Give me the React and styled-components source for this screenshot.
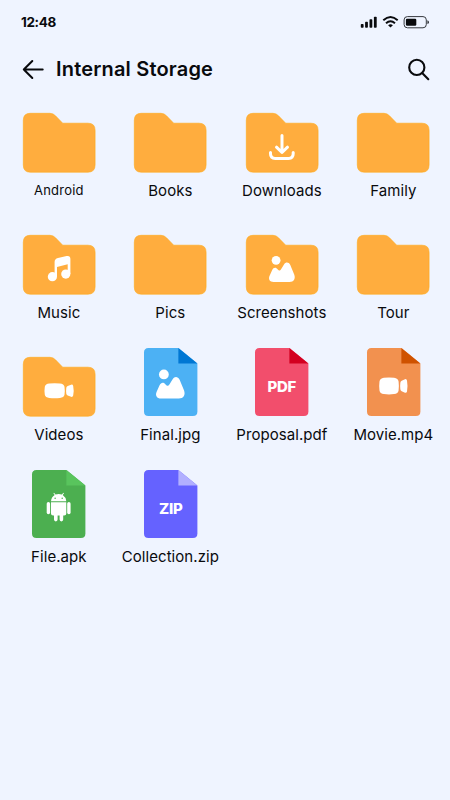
import React from 'react';
import styled, { createGlobalStyle } from 'styled-components';

const GlobalStyle = createGlobalStyle`
  * { box-sizing: border-box; }
  body { margin: 0; background: #eff4ff; }
`;

const Screen = styled.main`
  width: 450px;
  height: 800px;
  overflow: hidden;
  background: #eff4ff;
  color: #090a0d;
  font-family: Inter, 'Liberation Sans', sans-serif;
`;

const StatusBar = styled.div`
  height: 44px;
  padding: 0 21px;
  display: flex;
  align-items: center;
  justify-content: space-between;
`;

const Clock = styled.time`
  font-size: 13.5px;
  font-weight: 700;
  line-height: 20px;
  letter-spacing: -0.35px;
`;

const StatusIcons = styled.svg`
  width: 69px;
  height: 14px;
  display: block;
`;

const Header = styled.header`
  height: 50px;
  padding: 0 20px 0 22px;
  display: flex;
  align-items: center;
`;

const IconButton = styled.button`
  border: 0;
  padding: 0;
  background: none;
  color: inherit;
  display: flex;
  svg { display: block; }
`;

const Title = styled.h1`
  margin: 0 auto 0 12px;
  font-size: 20px;
  line-height: 28px;
  font-weight: 600;
  letter-spacing: 0.18px;
  white-space: nowrap;
`;

const Grid = styled.section`
  margin: 10.5px 0 0 3.1px;
  display: grid;
  grid-template-columns: repeat(4, 111.5px);
  grid-auto-rows: 121.9px;
`;

const Item = styled.div`
  display: flex;
  flex-direction: column;
  align-items: center;
`;

const Art = styled.div`
  height: 68px;
  display: flex;
  align-items: flex-end;
  svg { display: block; overflow: visible; }
`;

const Label = styled.span`
  margin-top: ${(p) => (p.$size ? 7.5 : 8.9)}px;
  font-size: ${(p) => p.$size || 15}px;
  line-height: 20px;
  letter-spacing: ${(p) => p.$spacing ?? 0.06}px;
  white-space: nowrap;
`;

const Badge = styled.text`
  font-family: Inter, 'Liberation Sans', sans-serif;
  font-size: 15px;
  font-weight: 800;
  letter-spacing: -0.3px;
  fill: #fff;
`;

const Download = () => (
  <g fill="none" stroke="#fff" strokeWidth="3" strokeLinecap="round" strokeLinejoin="round">
    <path d="M36 22.5V39.3M30.5 34.2L36 39.5L41.5 34.2" />
    <path d="M24.5 39.5V40.8Q24.5 45.4 29.2 45.4H42.6Q47.2 45.4 47.2 40.8V39.5" />
  </g>
);

const Music = () => (
  <g fill="#fff">
    <circle cx="29.4" cy="41.7" r="4.6" />
    <circle cx="42.8" cy="39.1" r="4.6" />
    <path d="M31.6 41.7V27Q31.6 23.8 35 23L43.6 21.1Q47.4 20.4 47.4 24V39.1H44.7V29.2L34 32V41.7Z" />
  </g>
);

const Mountains = () => (
  <g fill="#fff">
    <circle cx="7.1" cy="4.3" r="4.4" />
    <path d="M.5 20L3.1 14.2C4.7 11.2 6.9 11.2 8.8 13.5C10 15.1 11 14.8 12.2 13L15 8.5C16.8 5.8 19.6 5.9 21.3 9L25.3 18.8C26.7 22.9 24.8 26 20.6 26H4.6C.7 26-.8 23 .5 20Z" />
  </g>
);

const Camera = () => (
  <g fill="#fff">
    <path d="M5 .3Q10.3-.3 15.6.3Q19.6.7 20.2 3.6Q20.8 7.6 20.2 11.6Q19.6 14.4 15.6 14.8Q10.3 15.4 5 14.8Q1.1 14.4.5 11.6Q-.1 7.6.5 3.6Q1.1.7 5 .3Z" />
    <path d="M22 4.6Q22.2 3.3 23.4 2.8L26.8 1.5Q28.5 1 28.9 2.8Q29.9 7.6 28.9 12.4Q28.4 14.1 26.8 13.6L23.4 12.3Q22.2 11.9 22 10.6Q21.6 7.6 22 4.6Z" />
  </g>
);

const Robot = () => (
  <g fill="#fff">
    <path d="M19 31.2Q19.4 27 22.7 25L21.4 23.3L22 22.8L23.5 24.6Q26.7 23.4 29.9 24.6L31.4 22.8L32 23.3L30.7 25Q33.8 27 34.3 31.2Z" />
    <path d="M19 32.3H34.3V43.4Q34.3 45.4 32.2 45.4H31.2V49.6A1.8 1.8 0 0 1 27.6 49.6V45.4H25.6V49.6A1.8 1.8 0 0 1 22 49.6V45.4H21.1Q19 45.4 19 43.4Z" />
    <rect x="14.7" y="32" width="3.4" height="12.3" rx="1.7" />
    <rect x="35.2" y="32" width="3.4" height="12.3" rx="1.7" />
    <circle cx="23.1" cy="28.2" r=".75" fill="#4caf50" />
    <circle cx="30.2" cy="28.2" r=".75" fill="#4caf50" />
  </g>
);

const Folder = ({ children }) => (
  <svg width="72.4" height="59.5" viewBox="0 0 72.4 59.5">
    <path fill="#ffad3e" stroke="#ffa916" strokeWidth=".6" d="M7.2.3H27Q30.3.3 32.5 2.8L39.7 10.2H65Q72.1 10.2 72.1 17.2V52Q72.1 59.2 65 59.2H7.2Q.3 59.2.3 52V7.3Q.3.3 7.2.3Z" />
    {children}
  </svg>
);

const File = ({ color, fold, children }) => (
  <svg width="53.4" height="68" viewBox="0 0 53.4 68">
    <path fill={color} d="M4.5 0H34.4L53.4 15.5V63.5Q53.4 68 48.9 68H4.5Q0 68 0 63.5V4.5Q0 0 4.5 0Z" />
    <path fill={fold} d="M34.4 0L53.4 15.5H34.4Z" />
    {children}
  </svg>
);

const items = [
  { name: 'Android', size: 13, spacing: 0.2 },
  { name: 'Books' },
  { name: 'Downloads', icon: <Download /> },
  { name: 'Family' },
  { name: 'Music', icon: <Music /> },
  { name: 'Pics' },
  { name: 'Screenshots', icon: <g transform="translate(23 21)"><Mountains /></g> },
  { name: 'Tour' },
  { name: 'Videos', icon: <g transform="translate(21.3 26.2)"><Camera /></g> },
  { name: 'Final.jpg', color: '#4cb1f4', fold: '#0077d3', icon: <g transform="translate(12 21.7) scale(1.11)"><Mountains /></g> },
  { name: 'Proposal.pdf', color: '#f24e6c', fold: '#d30020', icon: <Badge x="26.7" y="44.4" textAnchor="middle">PDF</Badge> },
  { name: 'Movie.mp4', color: '#f2914f', fold: '#cf5200', icon: <g transform="translate(12 29.5) scale(.97 1.12)"><Camera /></g> },
  { name: 'File.apk', color: '#4caf50', fold: '#59c45d', icon: <Robot /> },
  { name: 'Collection.zip', color: '#6562ff', fold: '#b1afff', icon: <Badge x="26.7" y="43.6" textAnchor="middle">ZIP</Badge> },
];

export default function App() {
  return (
    <>
      <GlobalStyle />
      <Screen>
        <StatusBar>
          <Clock>12:48</Clock>
          <StatusIcons viewBox="0 0 69 14" fill="#090a0d">
            <rect x="0.8" y="9" width="2.8" height="3.8" rx=".8" />
            <rect x="5.1" y="6.8" width="2.8" height="6" rx=".8" />
            <rect x="9.5" y="4.3" width="2.8" height="8.5" rx=".8" />
            <rect x="13.9" y="1.8" width="2.8" height="11" rx=".8" />
            <g fill="none" stroke="#090a0d" strokeWidth="1.9">
              <path d="M23.3 5.2Q30.5-1.4 37.7 5.2" />
              <path d="M26 8.2Q30.5 4.1 35 8.2" />
            </g>
            <path d="M28.1 10.2Q30.5 8.2 32.9 10.2L30.5 12.6Z" />
            <rect x="44.1" y="1.6" width="22.2" height="11.2" rx="3.3" fill="none" stroke="#35383e" />
            <rect x="45.9" y="3.7" width="10.4" height="7" rx="1.2" />
            <path d="M67.4 5.3Q69 5.8 69 7.2Q69 8.6 67.4 9.1Z" fill="#35383e" />
          </StatusIcons>
        </StatusBar>
        <Header>
          <IconButton aria-label="Back">
            <svg width="22" height="22" viewBox="0 0 22 22" fill="none" stroke="currentColor" strokeWidth="2" strokeLinecap="round" strokeLinejoin="round">
              <path d="M20.7 11.5H1.8M10.3 3L1.8 11.5L10.3 20" />
            </svg>
          </IconButton>
          <Title>Internal Storage</Title>
          <IconButton aria-label="Search">
            <svg width="23" height="23" viewBox="0 0 23 23" fill="none" stroke="currentColor" strokeWidth="2.1" strokeLinecap="round">
              <circle cx="9.8" cy="9.4" r="7.6" />
              <path d="M15.4 15.2L21.3 21.2" />
            </svg>
          </IconButton>
        </Header>
        <Grid>
          {items.map(({ name, size, spacing, color, fold, icon }) => (
            <Item key={name}>
              <Art>{color ? <File color={color} fold={fold}>{icon}</File> : <Folder>{icon}</Folder>}</Art>
              <Label $size={size} $spacing={spacing}>{name}</Label>
            </Item>
          ))}
        </Grid>
      </Screen>
    </>
  );
}
